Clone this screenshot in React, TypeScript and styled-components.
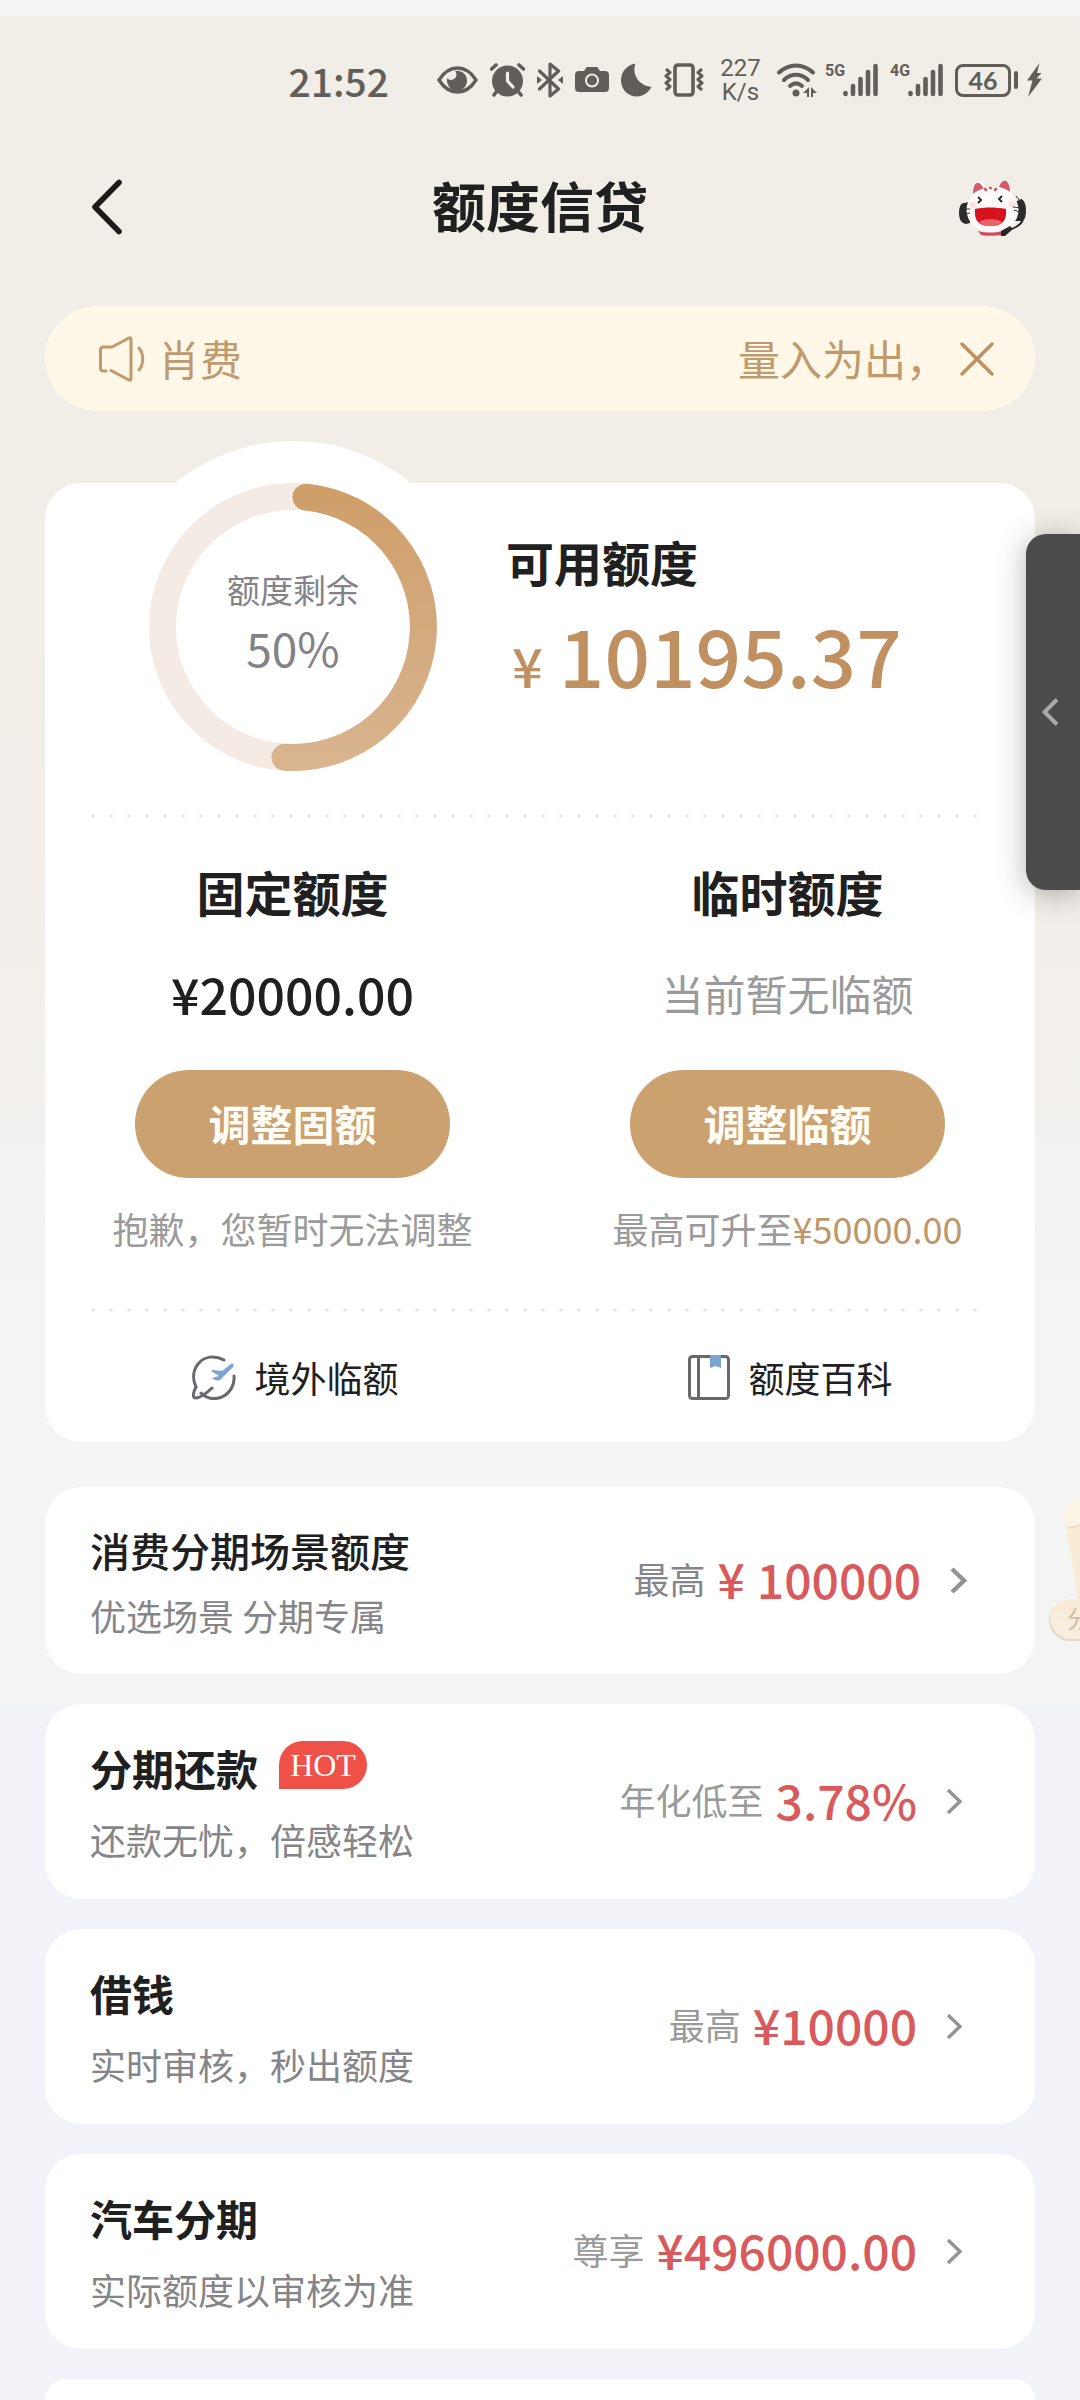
import React from 'react';
import styled, { createGlobalStyle } from 'styled-components';

const GlobalStyle = createGlobalStyle`
  * { box-sizing: border-box; }
  body {
    margin: 0;
    background: #f2f3f8;
    color: #202020;
    font-family: "Noto Sans CJK SC", "Noto Sans", sans-serif;
  }
  button { font: inherit; border: 0; padding: 0; background: none; cursor: pointer; }
  a { color: inherit; text-decoration: none; }
  h1, h2, p { margin: 0; }
  svg { display: block; flex: none; }
`;

const Page = styled.div`
  position: relative;
  display: flex;
  flex-direction: column;
  min-height: 100vh;
  overflow: hidden;
`;

const TopSection = styled.section`
  padding: 0 45px 30px;
  border-top: 16px solid #f4f4f4;
  background: linear-gradient(#f1ede7 0%, #f2ede8 48%, #f4f4f4 78%);
`;

const StatusBar = styled.div`
  display: flex;
  align-items: center;
  justify-content: flex-end;
  gap: 12px;
  height: 128px;
  margin-right: -7px;
  color: #615e5a;
`;

const Clock = styled.time`
  margin-right: 36px;
  font-size: 39px;
  line-height: 48px;
  font-weight: 500;
`;

const NetSpeed = styled.div`
  display: grid;
  width: 49px;
  font: 24px/24px Roboto, sans-serif;
  text-align: center;
`;

const Signal = styled.div`
  display: flex;
  align-items: flex-start;
  width: 53px;
`;

const SignalKind = styled.span`
  width: 18px;
  font: bold 16px/16px Roboto, sans-serif;
`;

const Battery = styled.div`
  display: flex;
  align-items: center;
  gap: 3px;
  margin-right: -3px;

  &::after {
    content: "";
    width: 4px;
    height: 18px;
    border-radius: 2px;
    background: currentColor;
  }
`;

const BatteryLevel = styled.span`
  width: 56px;
  height: 33px;
  border: 3px solid currentColor;
  border-radius: 8px;
  font: bold 25px/26px Lato, sans-serif;
  text-align: center;
`;

const Header = styled.header`
  display: flex;
  align-items: center;
  justify-content: space-between;
  height: 126px;
  padding: 0 9px 0 43px;
`;

const HeaderButton = styled.button`
  display: flex;
  width: 67px;
  color: #1c1b19;
`;

const PageTitle = styled.h1`
  padding: 0 34px 4px 0;
  font-size: 54px;
  line-height: 72px;
  font-weight: 700;
`;

const Notice = styled.div`
  display: flex;
  align-items: center;
  height: 105px;
  margin: 36px 0 72px;
  padding: 0 41px 0 53px;
  border-radius: 53px;
  background: #fff8e8;
  color: #c09a6c;
  font-size: 42px;
  line-height: 60px;
`;

const NoticeText = styled.p`
  display: flex;
  flex: 1;
  justify-content: space-between;
  padding: 0 12px 2px;
`;

const CloseButton = styled.button`
  color: #c18e5c;
`;

const Card = styled.section`
  border-radius: 36px;
  background: #fff;
`;

const Summary = styled.div`
  display: flex;
  align-items: flex-start;
  gap: 69px;
  padding: 0 0 43px 104px;
`;

const Ring = styled.div`
  position: relative;
  display: grid;
  flex: none;
  width: 288px;
  height: 288px;
  padding-bottom: 8px;
  place-content: center;
  text-align: center;
  color: #828288;

  &::before {
    content: "";
    position: absolute;
    inset: -42px;
    border-radius: 50%;
    background: #fff;
  }

  svg {
    position: absolute;
    inset: 0;
  }
`;

const RingLabel = styled.span`
  position: relative;
  font-size: 33px;
  line-height: 48px;
`;

const RingValue = styled.strong`
  position: relative;
  font-size: 46px;
  line-height: 68px;
  font-weight: 400;
`;

const Available = styled.div`
  padding-top: 48px;
`;

const BlockTitle = styled.h2`
  font-size: 48px;
  line-height: 60px;
  font-weight: 700;
`;

const Amount = styled.p`
  display: flex;
  align-items: baseline;
  gap: 16px;
  margin-top: 14px;
  color: #c09060;
  font-size: 80px;
  line-height: 96px;
  font-weight: 500;
`;

const Currency = styled.span`
  padding-left: 6px;
  font-size: 54px;
`;

const Dots = styled.div`
  height: 4px;
  margin: 0 46px;
  background: radial-gradient(circle at 2px 2px, #e9e9eb 2px, transparent 2px) 0 0 / 18px 4px;
`;

const Columns = styled.div`
  display: grid;
  grid-template-columns: 1fr 1fr;
`;

const Quota = styled.div`
  display: flex;
  flex-direction: column;
  align-items: center;
  padding: 43px 0 54px;
`;

const QuotaValue = styled.p<{ $muted?: boolean }>`
  margin: 42px 0 47px;
  font-size: ${(p) => (p.$muted ? 42 : 50)}px;
  line-height: 60px;
  font-weight: ${(p) => (p.$muted ? 400 : 500)};
  color: ${(p) => (p.$muted ? '#9a9a9a' : '#202020')};
`;

const AdjustButton = styled.button`
  width: 315px;
  height: 108px;
  border-radius: 54px;
  background: #cca170;
  color: #fffdf6;
  && {
    padding-bottom: 3px;
    font-size: 42px;
    font-weight: 700;
  }
`;

const Hint = styled.p`
  margin-top: 26px;
  padding-bottom: 2px;
  font-size: 36px;
  line-height: 48px;
  color: #9a9a9a;

  em {
    font-style: normal;
    color: #bf9669;
  }
`;

const QuickLink = styled.a`
  display: flex;
  align-items: center;
  justify-content: center;
  gap: 18px;
  height: 130px;
  padding-left: 6px;
  font-size: 36px;
  line-height: 48px;
`;

const List = styled.section`
  display: flex;
  flex: 1;
  flex-direction: column;
  gap: 30px;
  padding: 0 45px;
  background: #f2f3f8;
`;

const Row = styled.a<{ $compact?: boolean }>`
  display: flex;
  align-items: center;
  justify-content: space-between;
  min-height: ${(p) => (p.$compact ? 187 : 195)}px;
  margin-top: ${(p) => (p.$compact ? 45 : 0)}px;
  padding: 0 ${(p) => (p.$compact ? 68 : 72)}px 0 45px;
  border-radius: 36px;
  background: #fff;
`;

const NextRow = styled.div`
  flex: 1;
  min-height: 21px;
  border-radius: 36px 36px 0 0;
  background: #fff;
`;

const RowText = styled.div<{ $compact?: boolean }>`
  display: grid;
  gap: ${(p) => (p.$compact ? 14 : 20)}px;
`;

const RowTitle = styled.h2<{ $compact?: boolean }>`
  display: flex;
  align-items: flex-start;
  gap: 21px;
  font-size: ${(p) => (p.$compact ? 40 : 42)}px;
  line-height: 54px;
  font-weight: ${(p) => (p.$compact ? 500 : 700)};
`;

const Badge = styled.span`
  width: 88px;
  height: 48px;
  border-radius: 24px 24px 24px 0;
  background: #ef5148;
  color: #fff;
  font: 32px/48px "Liberation Serif", serif;
  text-align: center;
`;

const RowNote = styled.p`
  font-size: 36px;
  line-height: 48px;
  color: #858589;
`;

const RowSide = styled.div`
  display: flex;
  align-items: center;
  color: #939393;
`;

const RowLabel = styled.span<{ $dark?: boolean }>`
  padding-bottom: 6px;
  font-size: 36px;
  line-height: 60px;
  color: ${(p) => (p.$dark ? '#858589' : '#9a9a9a')};
`;

const RowValue = styled.strong`
  display: flex;
  gap: 12px;
  margin: 0 29px 0 12px;
  padding-bottom: 6px;
  font-size: 48px;
  line-height: 60px;
  font-weight: 500;
  color: #d95a5c;
`;

const SideTab = styled.button`
  position: absolute;
  top: 534px;
  right: 0;
  display: flex;
  align-items: center;
  width: 54px;
  height: 356px;
  padding-left: 16px;
  border-radius: 20px 0 0 20px;
  background: #4b4b4b;
  color: #a9a9a9;
  box-shadow: 0 4px 30px rgba(0, 0, 0, 0.3);
`;

const Promo = styled.a`
  position: absolute;
  top: 1496px;
  right: 0;
  display: flex;
  flex-direction: column;
  align-items: flex-end;
  width: 31px;
  overflow: hidden;
`;

const PromoPill = styled.span`
  width: 31px;
  height: 42px;
  padding-left: 18px;
  border-radius: 21px 0 0 21px;
  background: linear-gradient(#f8ead6, #f7efe3);
  box-shadow: inset 1px -2px 1px #e5d6c4;
  color: #d3bda3;
  font-size: 24px;
  line-height: 38px;
  white-space: nowrap;
`;

const EyeIcon = () => (
  <svg width="41" height="34" viewBox="0 0 41 34" aria-hidden="true">
    <path d="M2 17C7 9 13 5 20.500 5S34 9 39 17C34 25 28 29 20.500 29S7 25 2 17Z" fill="none" stroke="currentColor" strokeWidth="3.400" />
    <path d="M18 8a10 10 0 1 1-7.500 12.500 9 9 0 0 1-.200-5.500 4.500 4.500 0 0 0 5.500 1.500A5 5 0 0 0 18 8Z" fill="currentColor" />
  </svg>
);

const AlarmIcon = () => (
  <svg width="35" height="34" viewBox="0 0 35 34" aria-hidden="true">
    <circle cx="17.500" cy="18" r="15.500" fill="currentColor" />
    <path d="M1.500 6 6 2M33.500 6 29 2M7 28l-3 4M28 28l3 4" stroke="currentColor" strokeWidth="3.600" strokeLinecap="round" />
    <path d="M17.500 10v8l5.500 6" fill="none" stroke="#f1ede7" strokeWidth="3.200" strokeLinecap="round" strokeLinejoin="round" />
  </svg>
);

const BluetoothIcon = () => (
  <svg width="26" height="36" viewBox="0 0 26 36" aria-hidden="true">
    <path d="m2.500 9 19 18L13 34V2l8.500 7-19 18" fill="none" stroke="currentColor" strokeWidth="3.200" strokeLinejoin="round" strokeLinecap="round" />
    <path d="m0 14 5 4-5 4ZM26 14l-5 4 5 4Z" fill="currentColor" />
  </svg>
);

const CameraIcon = () => (
  <svg width="34" height="34" viewBox="0 0 34 34" aria-hidden="true">
    <path d="M4 8h5l2-3c.5-1 1-1 2-1h8c1 0 1.500 0 2 1l2 3h5a4 4 0 0 1 4 4v13a4 4 0 0 1-4 4H4a4 4 0 0 1-4-4V12a4 4 0 0 1 4-4Z" fill="currentColor" />
    <circle cx="17" cy="17.500" r="6" fill="none" stroke="#f1ede7" strokeWidth="2" />
  </svg>
);

const MoonIcon = () => (
  <svg width="31" height="34" viewBox="0 0 31 34" aria-hidden="true">
    <path d="M14.500.500C11 10 16 22 30.500 24 27 30 22 33.500 16 33.500 7 33.500 0 26.500 0 17.500 0 8.500 6 2 14.500.500Z" fill="currentColor" />
  </svg>
);

const VibrateIcon = () => (
  <svg width="40" height="34" viewBox="0 0 40 34" fill="none" stroke="currentColor" aria-hidden="true">
    <rect x="11" y="2" width="18" height="30" rx="3" strokeWidth="3.600" />
    <path d="m2 6 4 3.500-4 3.500 4 3.500-4 3.500 4 3.500-4 3.500M38 6l-4 3.500 4 3.500-4 3.500 4 3.500-4 3.500 4 3.500" strokeWidth="3" strokeLinejoin="round" />
  </svg>
);

const WifiIcon = () => (
  <svg width="36" height="34" viewBox="0 0 36 34" overflow="visible" aria-hidden="true">
    <path d="M2 9.500c10-9.500 24-9.500 34 0M7 17c7-7 17-7 24 0M13 23c4-3.500 8-3.500 12 0" fill="none" stroke="currentColor" strokeWidth="4" strokeLinecap="round" />
    <circle cx="19" cy="30" r="3.500" fill="currentColor" />
    <path d="m26 30 6-6v10h-2v-4ZM40 30l-6-6v10h2v-4Z" fill="currentColor" />
  </svg>
);

const BarsIcon = () => (
  <svg width="35" height="34" viewBox="0 0 35 34" stroke="currentColor" strokeWidth="4.600" strokeLinecap="round" aria-hidden="true">
    <path d="M2.500 30v1M10 23v8M17.500 16v15M25 9v22M32.500 3v28" />
  </svg>
);

const BoltIcon = () => (
  <svg width="15" height="34" viewBox="0 0 15 34" aria-hidden="true">
    <path d="M12.500 0 0 17.500h5.500L1 34 15 15.500H9.500l5-5.500H10Z" fill="currentColor" />
  </svg>
);

const CatIcon = () => (
  <svg width="67" height="57" viewBox="0 0 67 57" aria-hidden="true">
    <path d="M5 24c-3 0-5 4-5 10s2 10 7 11l4-1V23ZM62 20l-6 3v19h7c3-1 4-5 4-11s-2-10-5-11Z" fill="#2d2a2b" />
    <path d="M13 16C13 6 15 1 20 2c4 1 6 5 8 9ZM39 10c2-6 5-9 8-8s6 7 6 14Z" fill="#fff" />
    <path d="M14 15c0-8 2-12 6-11 2 1 4 4 5 6-4 1-8 2-11 5ZM40 8c2-5 4-7 7-6 3 2 4 6 4 11-4-3-7-4-11-5Z" fill="#d9586b" />
    <ellipse cx="33.500" cy="31" rx="26" ry="23" fill="#fdfaf9" />
    <path d="M26 10l1 1M37 10l-1 1M31 9h1" stroke="#d9586b" strokeWidth="2.600" strokeLinecap="round" />
    <ellipse cx="14" cy="26" rx="4" ry="3" fill="#fbe3e3" />
    <ellipse cx="53" cy="25" rx="4" ry="3" fill="#fbe3e3" />
    <path d="M19 18l3 3-3 3M43 17l-3 3 3 3" fill="none" stroke="#222" strokeWidth="1.800" />
    <path d="M5 30h6M6 35l5-1M54 28l9 1M55 31l8 3M57 17l4 5" stroke="#333" strokeWidth="1" />
    <path d="M16 30c10-2 21-2 31 0 1 11-3 17-15.500 17S15 41 16 30Z" fill="#d5121d" />
    <path d="M20 43c6-4 17-4 23 0-3 3-7 4-11.500 4S23 46 20 43Z" fill="#e8646b" />
    <path d="M19 52c8 2 17 2 24 0v4c-8 1-18 1-21 0Z" fill="#d4485a" />
    <path d="M64 41c-2 4-6 7-11 9" fill="none" stroke="#222" strokeWidth="1.800" />
    <path d="m42 52 9-5 3 3-8 7h-4Z" fill="#292627" />
  </svg>
);

const SpeakerIcon = () => (
  <svg width="48" height="48" viewBox="0 0 48 48" fill="none" stroke="currentColor" strokeWidth="3" strokeLinecap="round" strokeLinejoin="round" aria-hidden="true">
    <path d="M8 36H5.500c-2 0-3-1-3-3V15c0-2 1-3 3-3H14l17-9c1-.5 2 0 2 1v40c0 1-1 1.500-2 1L13 35.500M41 13c5 6 5 16 0 22" />
  </svg>
);

const PlaneIcon = () => (
  <svg width="44" height="45" viewBox="0 0 44 45" fill="none" aria-hidden="true">
    <path d="M32 5C23 0 12 1 6 9c-6 8-5 17-2 23M42 21c1 9-4 17-12 21-8 3-15 2-21-4" stroke="#68696d" strokeWidth="3" strokeLinecap="round" />
    <path d="M4 32c-4 8-3 11 0 11s10-4 16-10" stroke="#68696d" strokeWidth="3" strokeLinecap="round" />
    <path d="m20 15 10 1 9-7c2-1 4 1 2 3L28 25c-3 1-6 0-8-2l7-2-8-5Z" fill="#7ba4cf" />
  </svg>
);

const BookIcon = () => (
  <svg width="42" height="45" viewBox="0 0 42 45" fill="none" aria-hidden="true">
    <rect x="1.500" y="1.500" width="39" height="42" rx="3" stroke="#68696d" strokeWidth="3" />
    <path d="M10.500 2v41" stroke="#68696d" strokeWidth="3" />
    <path d="M22 0h11v13l-5.500-2-5.500 2Z" fill="#7ba4cf" />
  </svg>
);

const CupIcon = () => (
  <svg width="18" height="103" viewBox="0 0 18 103" aria-hidden="true">
    <path d="M3 30 0 16l5-2 1-6 5 1 1-6 6-3v103h-2Z" fill="#fbf3e6" />
    <path d="M5 32h13v71h-2Z" fill="#f9ecd7" />
    <path d="M5 32c5-2 9 0 13-3" stroke="#e9d3ba" strokeWidth="1.500" fill="none" />
  </svg>
);

const Chevron = ({ bold }: { bold?: boolean }) => (
  <svg width="17" height="27" viewBox="0 0 17 27" fill="none" stroke="currentColor" strokeWidth={bold ? 4.4 : 3.4} aria-hidden="true">
    <path d="m2 2 12 11.500L2 25" />
  </svg>
);

const RING_RADIUS = 130.5;

const QuotaRing = ({ percent }: { percent: number }) => {
  const length = 2 * Math.PI * RING_RADIUS;
  return (
    <Ring>
      <svg width="288" height="288" viewBox="0 0 288 288" fill="none" aria-hidden="true">
        <defs>
          <linearGradient id="ringFill" x1="0" y1="0" x2="0" y2="1">
            <stop offset="0" stopColor="#cf9f6a" />
            <stop offset="1" stopColor="#d8b48f" />
          </linearGradient>
        </defs>
        <circle cx="144" cy="144" r={RING_RADIUS} stroke="#f4ece4" strokeWidth="27" />
        <path
          d="M157 14.150A130.500 130.500 0 0 1 136 274.250"
          stroke="url(#ringFill)"
          strokeWidth="27"
          strokeLinecap="round"
          strokeDasharray={`${(length * percent) / 100} ${length}`}
        />
      </svg>
      <RingLabel>额度剩余</RingLabel>
      <RingValue>{percent}%</RingValue>
    </Ring>
  );
};

type Offer = {
  title: string;
  note: string;
  label: string;
  value: string[];
  badge?: string;
};

const sceneOffer: Offer = {
  title: '消费分期场景额度',
  note: '优选场景 分期专属',
  label: '最高',
  value: ['¥', '100000'],
};

const offers: Offer[] = [
  { title: '分期还款', badge: 'HOT', note: '还款无忧，倍感轻松', label: '年化低至', value: ['3.78%'] },
  { title: '借钱', note: '实时审核，秒出额度', label: '最高', value: ['¥10000'] },
  { title: '汽车分期', note: '实际额度以审核为准', label: '尊享', value: ['¥496000.00'] },
];

const OfferRow = ({ offer, compact }: { offer: Offer; compact?: boolean }) => (
  <Row href="#" $compact={compact}>
    <RowText $compact={compact}>
      <RowTitle $compact={compact}>
        {offer.title}
        {offer.badge && <Badge>{offer.badge}</Badge>}
      </RowTitle>
      <RowNote>{offer.note}</RowNote>
    </RowText>
    <RowSide>
      <RowLabel $dark={compact}>{offer.label}</RowLabel>
      <RowValue>
        {offer.value.map((part) => (
          <span key={part}>{part}</span>
        ))}
      </RowValue>
      <Chevron bold={compact} />
    </RowSide>
  </Row>
);

export default function App() {
  return (
    <>
      <GlobalStyle />
      <Page>
        <TopSection>
          <StatusBar>
            <Clock>21:52</Clock>
            <EyeIcon />
            <AlarmIcon />
            <BluetoothIcon />
            <CameraIcon />
            <MoonIcon />
            <VibrateIcon />
            <NetSpeed>
              <span>227</span>
              <span>K/s</span>
            </NetSpeed>
            <WifiIcon />
            <Signal>
              <SignalKind>5G</SignalKind>
              <BarsIcon />
            </Signal>
            <Signal>
              <SignalKind>4G</SignalKind>
              <BarsIcon />
            </Signal>
            <Battery>
              <BatteryLevel>46</BatteryLevel>
            </Battery>
            <BoltIcon />
          </StatusBar>

          <Header>
            <HeaderButton aria-label="返回">
              <svg width="36" height="56" viewBox="0 0 36 56" fill="none" stroke="currentColor" strokeWidth="5.600" strokeLinecap="round" strokeLinejoin="round">
                <path d="M31 3.500 7 28l24 24.500" />
              </svg>
            </HeaderButton>
            <PageTitle>额度信贷</PageTitle>
            <HeaderButton aria-label="在线客服">
              <CatIcon />
            </HeaderButton>
          </Header>

          <Notice>
            <SpeakerIcon />
            <NoticeText>
              <span>肖费</span>
              <span>量入为出，</span>
            </NoticeText>
            <CloseButton aria-label="关闭">
              <svg width="34" height="34" viewBox="0 0 34 34" stroke="currentColor" strokeWidth="3.400" strokeLinecap="round">
                <path d="m2 2 30 30M32 2 2 32" />
              </svg>
            </CloseButton>
          </Notice>

          <Card>
            <Summary>
              <QuotaRing percent={50} />
              <Available>
                <BlockTitle>可用额度</BlockTitle>
                <Amount>
                  <Currency>¥</Currency>
                  <span>10195.37</span>
                </Amount>
              </Available>
            </Summary>
            <Dots />
            <Columns>
              <Quota>
                <BlockTitle>固定额度</BlockTitle>
                <QuotaValue>¥20000.00</QuotaValue>
                <AdjustButton>调整固额</AdjustButton>
                <Hint>抱歉，您暂时无法调整</Hint>
              </Quota>
              <Quota>
                <BlockTitle>临时额度</BlockTitle>
                <QuotaValue $muted>当前暂无临额</QuotaValue>
                <AdjustButton>调整临额</AdjustButton>
                <Hint>
                  最高可升至<em>¥50000.00</em>
                </Hint>
              </Quota>
            </Columns>
            <Dots />
            <Columns>
              <QuickLink href="#">
                <PlaneIcon />
                境外临额
              </QuickLink>
              <QuickLink href="#">
                <BookIcon />
                额度百科
              </QuickLink>
            </Columns>
          </Card>

          <OfferRow offer={sceneOffer} compact />
        </TopSection>

        <List>
          {offers.map((offer) => (
            <OfferRow key={offer.title} offer={offer} />
          ))}
          <NextRow />
        </List>

        <SideTab aria-label="展开侧边栏">
          <svg width="17" height="28" viewBox="0 0 17 28" fill="none" stroke="currentColor" strokeWidth="4">
            <path d="M15 1.500 2.500 14 15 26.500" />
          </svg>
        </SideTab>
        <Promo href="#">
          <CupIcon />
          <PromoPill>分</PromoPill>
        </Promo>
      </Page>
    </>
  );
}
